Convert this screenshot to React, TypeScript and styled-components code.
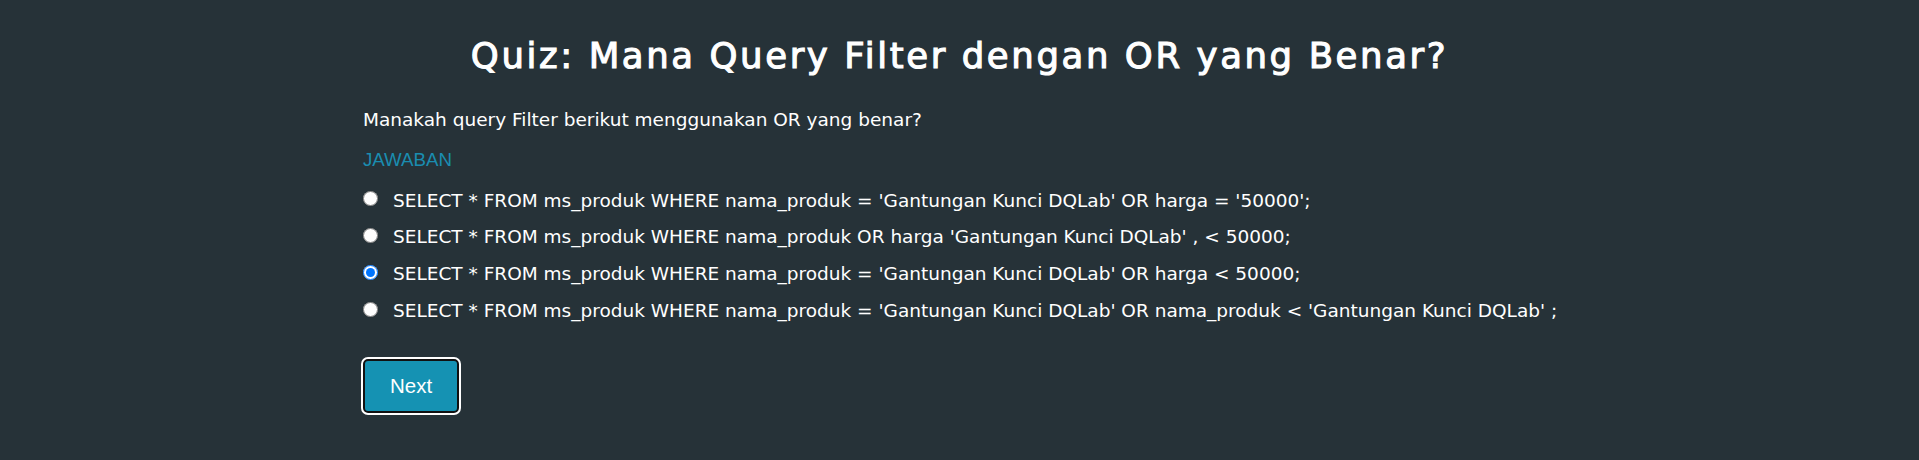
import React from "react";
import styled, { createGlobalStyle } from "styled-components";

const GlobalStyle = createGlobalStyle`
  html, body {
    margin: 0;
    padding: 0;
    background: #263238;
    min-height: 100%;
  }
  body {
    font-family: "DejaVu Sans", "Noto Sans", sans-serif;
    color: #ffffff;
  }
`;

const Page = styled.main`
  min-height: 460px;
  padding-top: 34px;
  box-sizing: border-box;
`;

const Container = styled.div`
  max-width: 1193px;
  margin: 0 auto;
`;

const Title = styled.h1`
  margin: 0 0 30px;
  font-family: "DejaVu Sans", sans-serif;
  font-weight: 400;
  font-size: 35.5px;
  line-height: 44px;
  letter-spacing: 2.6px;
  -webkit-text-stroke: 1.1px #ffffff;
  text-align: center;
  color: #ffffff;
`;

const Question = styled.p`
  margin: 0 0 15.6px;
  font-size: 18.5px;
  line-height: 24px;
`;

const AnswerLabel = styled.div`
  margin: 0 0 11px;
  font-family: "Liberation Sans", Arial, sans-serif;
  font-size: 18.7px;
  line-height: 24px;
  color: #1a8db0;
`;

const Options = styled.div`
  display: flex;
  flex-direction: column;
`;

const Option = styled.label`
  display: flex;
  align-items: center;
  gap: 15px;
  height: 36.8px;
  font-size: 18.5px;
  line-height: 36.8px;
  white-space: nowrap;
  cursor: pointer;
`;

const Radio = styled.input`
  width: 15px;
  height: 15px;
  margin: 0 0 4px 0;
  flex: none;
`;

const NextButton = styled.button`
  margin: 29px 0 0;
  width: 96px;
  height: 54px;
  border: 2px solid #111111;
  border-radius: 5px;
  outline: 2px solid #ffffff;
  outline-offset: 0;
  background: #1592b3;
  color: #ffffff;
  font-family: "Liberation Sans", Arial, sans-serif;
  font-size: 20.5px;
  cursor: pointer;
`;

const choices = [
  "SELECT * FROM ms_produk WHERE nama_produk = 'Gantungan Kunci DQLab' OR harga = '50000';",
  "SELECT * FROM ms_produk WHERE nama_produk OR harga 'Gantungan Kunci DQLab' , < 50000;",
  "SELECT * FROM ms_produk WHERE nama_produk = 'Gantungan Kunci DQLab' OR harga < 50000;",
  "SELECT * FROM ms_produk WHERE nama_produk = 'Gantungan Kunci DQLab' OR nama_produk < 'Gantungan Kunci DQLab' ;",
];

export default function App() {
  return (
    <>
      <GlobalStyle />
      <Page>
        <Container>
          <Title>Quiz: Mana Query Filter dengan OR yang Benar?</Title>
          <Question>Manakah query Filter berikut menggunakan OR yang benar?</Question>
          <AnswerLabel>JAWABAN</AnswerLabel>
          <Options>
            {choices.map((c, i) => (
              <Option key={i}>
                <Radio type="radio" name="answer" defaultChecked={i === 2} />
                <span>{c}</span>
              </Option>
            ))}
          </Options>
          <NextButton type="button">Next</NextButton>
        </Container>
      </Page>
    </>
  );
}
